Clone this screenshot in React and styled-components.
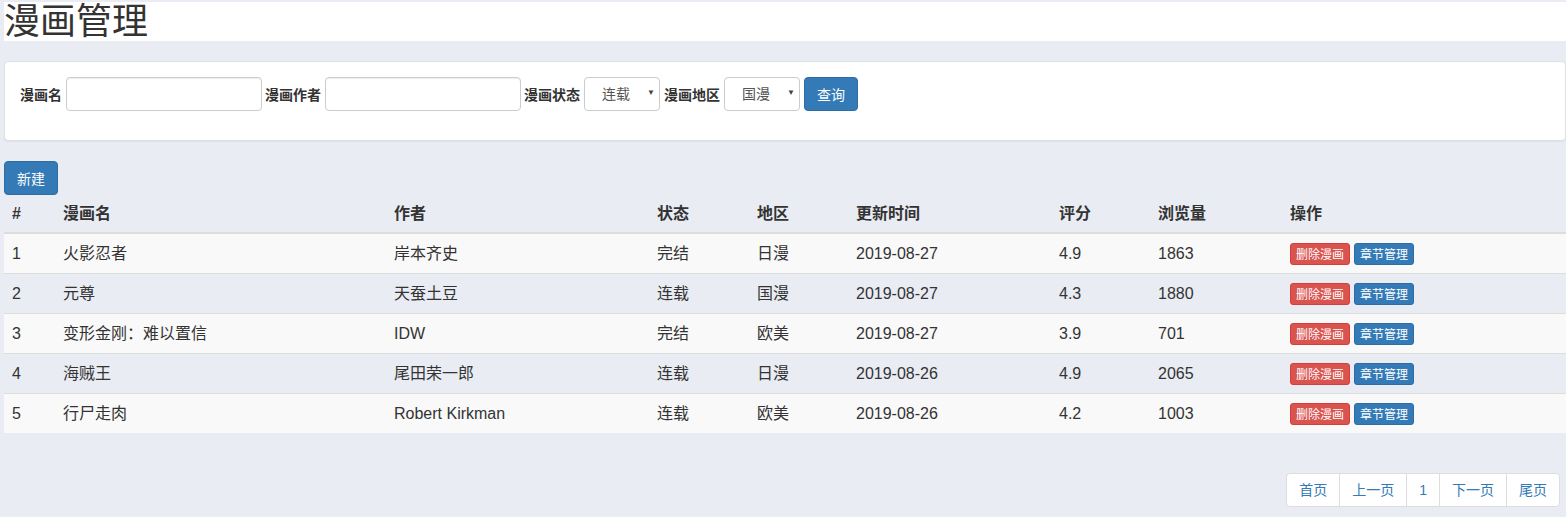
import React from 'react'
import styled, { createGlobalStyle } from 'styled-components'

const GlobalStyle = createGlobalStyle`
  body {
    margin: 0;
    background: #e9ecf3;
    font-family: "Liberation Sans", Arial, "Noto Sans CJK SC", sans-serif;
    font-size: 14px;
    color: #333;
  }
  * { box-sizing: border-box; }
`

const Page = styled.div`
  padding: 2px 0 0 4px;
`

const TitleBar = styled.div`
  background: #fff;
  height: 39px;
`

const Title = styled.h1`
  margin: 0;
  font-size: 36px;
  font-weight: 400;
  line-height: 39px;
`

const Panel = styled.div`
  margin-top: 20px;
  background: #fff;
  border: 1px solid #dde0e6;
  border-radius: 4px;
  box-shadow: 0 1px 1px rgba(0, 0, 0, 0.05);
  padding: 15px 15px 29px;
`

const SearchForm = styled.form`
  display: flex;
  align-items: center;
  margin: 0;
`

const Label = styled.label`
  font-weight: 700;
  font-size: 14px;
  margin-right: 4px;
`

const TextInput = styled.input`
  width: 196px;
  height: 34px;
  border: 1px solid #ccc;
  border-radius: 4px;
  box-shadow: inset 0 1px 1px rgba(0, 0, 0, 0.075);
  margin-right: 3px;
  padding: 6px 12px;
  font: inherit;
`

const SelectWrap = styled.div`
  position: relative;
  margin-right: 4px;
`

const Select = styled.select`
  appearance: none;
  width: 76px;
  height: 34px;
  border: 1px solid #ccc;
  border-radius: 4px;
  background: #fff;
  color: #555;
  padding: 0 0 0 17px;
  font-family: inherit;
  font-size: 14px;
`

const Arrow = styled.span`
  position: absolute;
  right: 5px;
  top: 11px;
  font-size: 8px;
  color: #444;
  pointer-events: none;
`

const Button = styled.button`
  height: ${p => (p.$xs ? '22px' : '34px')};
  padding: ${p => (p.$xs ? '0 5px' : '0 12px')};
  font-family: inherit;
  font-size: ${p => (p.$xs ? '12px' : '14px')};
  color: #fff;
  border-radius: ${p => (p.$xs ? '3px' : '4px')};
  border: 1px solid ${p => (p.$danger ? '#d43f3a' : '#2e6da4')};
  background: ${p => (p.$danger ? '#d9534f' : '#337ab7')};
  cursor: pointer;
  vertical-align: middle;
`

const Toolbar = styled.div`
  margin-top: 20px;
`

const Table = styled.table`
  width: 1562px;
  border-collapse: collapse;
  table-layout: fixed;
  margin-top: 1px;
`

const Th = styled.th`
  text-align: left;
  padding: 8px;
  line-height: 20px;
  font-size: 16px;
  border-bottom: 2px solid #dddddd;
`

const Tr = styled.tr`
  background: ${p => (p.$odd ? '#f9f9f9' : 'transparent')};
  border-top: 1px solid #dddddd;
`

const Td = styled.td`
  padding: 8px;
  line-height: 23px;
  font-size: 16px;
  white-space: nowrap;
`

const Actions = styled.div`
  display: flex;
  gap: 4px;
  align-items: center;
  height: 23px;
`

const Footer = styled.div`
  display: flex;
  justify-content: flex-end;
  padding: 40px 6px 0 0;
`

const Pager = styled.ul`
  display: flex;
  list-style: none;
  margin: 0;
  padding: 0;
`

const PageItem = styled.li`
  padding: 6px 12px;
  line-height: 20px;
  font-size: 14px;
  color: #337ab7;
  background: #fff;
  border: 1px solid #ddd;
  margin-left: -1px;
  &:first-child {
    border-radius: 4px 0 0 4px;
  }
  &:last-child {
    border-radius: 0 4px 4px 0;
  }
`

const columns = [
  ['#', 51], ['漫画名', 331], ['作者', 263], ['状态', 100], ['地区', 99],
  ['更新时间', 203], ['评分', 99], ['浏览量', 132], ['操作', 284],
]

const comics = [
  [1, '火影忍者', '岸本齐史', '完结', '日漫', '2019-08-27', '4.9', 1863],
  [2, '元尊', '天蚕土豆', '连载', '国漫', '2019-08-27', '4.3', 1880],
  [3, '变形金刚：难以置信', 'IDW', '完结', '欧美', '2019-08-27', '3.9', 701],
  [4, '海贼王', '尾田荣一郎', '连载', '日漫', '2019-08-26', '4.9', 2065],
  [5, '行尸走肉', 'Robert Kirkman', '连载', '欧美', '2019-08-26', '4.2', 1003],
]

const App = () => {
  return (
    <Page>
      <GlobalStyle />
      <TitleBar>
        <Title>漫画管理</Title>
      </TitleBar>
      <Panel>
        <SearchForm onSubmit={e => e.preventDefault()}>
          <Label>漫画名</Label>
          <TextInput />
          <Label>漫画作者</Label>
          <TextInput />
          <Label>漫画状态</Label>
          <SelectWrap>
            <Select defaultValue="连载">
              <option>连载</option>
              <option>完结</option>
            </Select>
            <Arrow>▼</Arrow>
          </SelectWrap>
          <Label>漫画地区</Label>
          <SelectWrap>
            <Select defaultValue="国漫">
              <option>国漫</option>
              <option>日漫</option>
              <option>欧美</option>
            </Select>
            <Arrow>▼</Arrow>
          </SelectWrap>
          <Button type="submit">查询</Button>
        </SearchForm>
      </Panel>
      <Toolbar>
        <Button>新建</Button>
      </Toolbar>
      <Table>
        <colgroup>
          {columns.map(([name, w]) => <col key={name} style={{ width: w }} />)}
        </colgroup>
        <thead>
          <tr>
            {columns.map(([name]) => <Th key={name}>{name}</Th>)}
          </tr>
        </thead>
        <tbody>
          {comics.map((row, i) => (
            <Tr key={row[0]} $odd={i % 2 === 0}>
              {row.map((cell, j) => <Td key={j}>{cell}</Td>)}
              <Td>
                <Actions>
                  <Button $xs $danger>删除漫画</Button>
                  <Button $xs>章节管理</Button>
                </Actions>
              </Td>
            </Tr>
          ))}
        </tbody>
      </Table>
      <Footer>
        <Pager>
          <PageItem>首页</PageItem>
          <PageItem>上一页</PageItem>
          <PageItem>1</PageItem>
          <PageItem>下一页</PageItem>
          <PageItem>尾页</PageItem>
        </Pager>
      </Footer>
    </Page>
  )
}

export default App
